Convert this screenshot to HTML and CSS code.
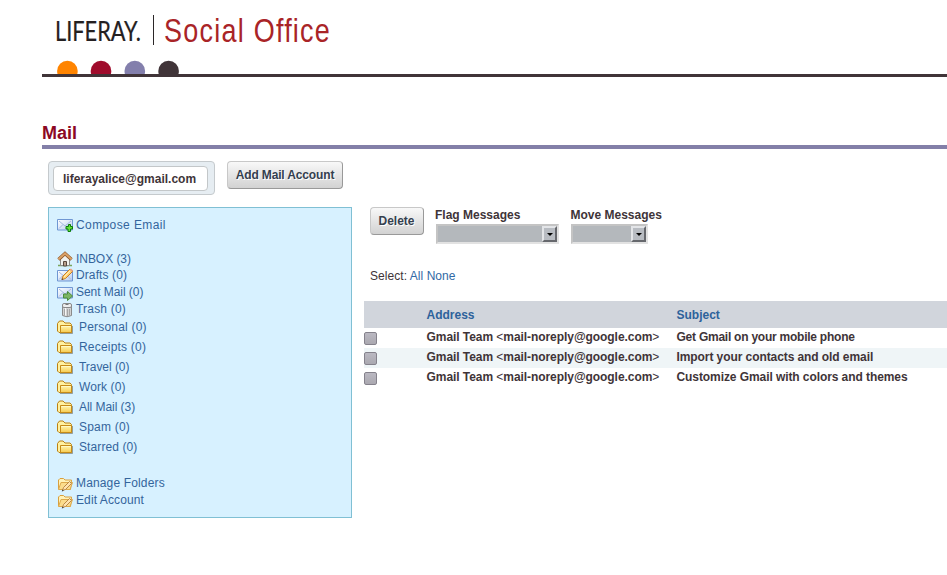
FILE: index.html
```html
<!DOCTYPE html>
<html lang="en">
<head>
<meta charset="utf-8">
<title>Mail - Liferay Social Office</title>
<link rel="stylesheet" href="styles.css">
</head>
<body>
<svg class="sprite" aria-hidden="true">
  <defs>
    <linearGradient id="gold" x2="0" y2="1"><stop stop-color="#fff9b0"/><stop offset="1" stop-color="#f6c94f"/></linearGradient>
    <linearGradient id="paper" x2="1" y2="1"><stop stop-color="#fff"/><stop offset="1" stop-color="#b8cdf0"/></linearGradient>
  </defs>
  <symbol id="envelope" viewBox="0 0 16 16">
    <path d="M.5 2.500h15v10.500h-15z" fill="url(#paper)" stroke="#6f97d3"/>
    <path d="M2 4l6 5 6-5M2 11.500l4-4M14 11.500l-4-4" fill="none" stroke="#a5b9df"/>
  </symbol>
  <symbol id="compose" viewBox="0 0 16 16">
    <use href="#envelope"/>
    <path d="M11.500 7.500h2v2h2v2.500h-2v2.500h-2.500v-2.500H9V9.500h2.500z" fill="#64df3c" stroke="#087d09"/>
  </symbol>
  <symbol id="home" viewBox="0 0 16 16">
    <path d="M1 14.500h14" stroke="#79a65b" stroke-width="1.500"/>
    <path d="M3.500 7.500L8 3.500l4.500 4V14.500h-9z" fill="#f2f2ee" stroke="#8c8c88"/>
    <path d="M6.500 15V10.500h3V15z" fill="#b8a08c" stroke="#59483e"/>
    <path d="M1.500 8.500L8 2.500l6.500 6" fill="none" stroke="#8b5527" stroke-width="3.400"/>
    <path d="M1.500 8.300L8 2.400l6.500 5.900" fill="none" stroke="#d9a066" stroke-width="2.100"/>
  </symbol>
  <symbol id="draft" viewBox="0 0 16 16">
    <use href="#envelope"/>
    <path d="M5 11.500l1-3.500 7-7 2.500 2.500-7 7z" fill="#ffd276" stroke="#c87d25"/>
    <path d="M7 9l6-6" stroke="#fff1b8"/><path d="M12.500 1.500L14 .5l2 2-1 1.500z" fill="#e8a27e"/>
    <path d="M4.500 12l.5-2 1.500 1.500z" fill="#554639"/>
  </symbol>
  <symbol id="sent" viewBox="0 0 16 16">
    <use href="#envelope"/>
    <path d="M6.500 9h4v-2.500l5 4.500-5 4.500v-2.500h-4z" fill="#7db565" stroke="#4b8c3b"/>
  </symbol>
  <symbol id="trash" viewBox="0 0 16 16">
    <path d="M3.500 4v9.500q4.500 2.500 9 0V4z" fill="#d2d2d2" stroke="#8a8a8a"/>
    <path d="M5.500 7v6.500M8.500 7v7M10.500 7v6.500" stroke="#a5a5a5"/>
    <path d="M6.500 6v7.500" stroke="#f7f7f7"/>
    <rect x="3.500" y="1.500" width="9" height="4" rx="1.500" fill="#ededed" stroke="#888"/>
    <path d="M6.500 2.500h3" stroke="#777"/>
  </symbol>
  <symbol id="folder" viewBox="0 0 16 16">
    <path d="M3 14.500h12.500V7" fill="none" stroke="#777a70" opacity=".7"/>
    <path d="M.5 12V4.500L2.500 2h3.500l2 2h5l1.500 1.500v8H2z" fill="#fff1a0" stroke="#bb8012"/>
    <path d="M3.500 6.500h11v7h-11z" fill="url(#gold)" stroke="#c58b18"/>
    <path d="M4.500 7.500h9" stroke="#fff8c4"/>
  </symbol>
  <symbol id="edit" viewBox="0 0 16 16">
    <path d="M1.500 13V4L3 2.500h3.500L8 4h6.500l-1 9.500z" fill="#fff2b8" stroke="#d9a03e"/>
    <path d="M1.500 13.500L4 6.500h11.500l-2.500 7z" fill="#fbdc8c" stroke="#dda94c"/>
    <path d="M5.500 14.500l1-3 6-6 2 2-6 6z" fill="#ffe3ae" stroke="#b98745"/>
    <path d="M4.800 15.500l.6-2 1.500 1.300z" fill="#444"/>
  </symbol>
</svg>

<header class="banner">
  <svg class="logo" width="300" height="74" viewBox="42 0 300 74" role="img" aria-label="Liferay Social Office">
    <text class="logo-brand" x="55" y="41" textLength="86" lengthAdjust="spacingAndGlyphs">LIFERAY.</text>
    <path d="M153.500 15v30" stroke="#2b2728"/>
    <text class="logo-product" transform="translate(164 42) scale(.83 1)">Social Office</text>
    <circle cx="67.400" cy="71" r="10.300" fill="#ff8400"/>
    <circle cx="101" cy="71" r="10.300" fill="#a00c2c"/>
    <circle cx="134.800" cy="71" r="10.300" fill="#837fac"/>
    <circle cx="168.600" cy="71" r="10.300" fill="#403438"/>
  </svg>
</header>

<main>
  <h1>Mail</h1>
  <div class="accounts">
    <div class="account-tab"><span>liferayalice@gmail.com</span></div>
    <button class="button add">Add Mail Account</button>
  </div>
  <div class="columns">
    <nav class="sidebar">
      <a class="loose low"><svg><use href="#compose"/></svg><span>Compose Email</span></a>
      <div class="group">
        <a class="tight low"><svg><use href="#home"/></svg><span>INBOX (3)</span></a>
        <a><svg><use href="#draft"/></svg><span>Drafts (0)</span></a>
        <a class="tight"><svg><use href="#sent"/></svg><span>Sent Mail (0)</span></a>
        <a class="trash"><svg><use href="#trash"/></svg><span>Trash (0)</span></a>
        <a class="folder wide"><svg><use href="#folder"/></svg><span>Personal (0)</span></a>
        <a class="folder wide"><svg><use href="#folder"/></svg><span>Receipts (0)</span></a>
        <a class="folder tight"><svg><use href="#folder"/></svg><span>Travel (0)</span></a>
        <a class="folder"><svg><use href="#folder"/></svg><span>Work (0)</span></a>
        <a class="folder tight"><svg><use href="#folder"/></svg><span>All Mail (3)</span></a>
        <a class="folder wide"><svg><use href="#folder"/></svg><span>Spam (0)</span></a>
        <a class="folder"><svg><use href="#folder"/></svg><span>Starred (0)</span></a>
      </div>
      <div class="group">
        <a class="manage"><svg><use href="#edit"/></svg><span>Manage Folders</span></a>
        <a><svg><use href="#edit"/></svg><span>Edit Account</span></a>
      </div>
    </nav>
    <section class="messages">
      <div class="toolbar">
        <button class="button delete">Delete</button>
        <div class="field flag"><span>Flag Messages</span><div class="select"><i></i></div></div>
        <div class="field move"><span>Move Messages</span><div class="select"><i></i></div></div>
      </div>
      <p class="pick">Select: <a>All</a> <a>None</a></p>
      <div class="table">
        <div class="row head"><span></span><span>Address</span><span>Subject</span></div>
        <div class="row"><b class="check"></b><span class="from">Gmail Team <i>&lt;</i>mail-noreply@google.com<i>&gt;</i></span><span class="narrow">Get Gmail on your mobile phone</span></div>
        <div class="row alt"><b class="check"></b><span class="from">Gmail Team <i>&lt;</i>mail-noreply@google.com<i>&gt;</i></span><span class="subject">Import your contacts and old email</span></div>
        <div class="row"><b class="check"></b><span class="from">Gmail Team <i>&lt;</i>mail-noreply@google.com<i>&gt;</i></span><span class="subject">Customize Gmail with colors and themes</span></div>
      </div>
    </section>
  </div>
</main>
</body>
</html>
```
FILE: styles.css
```css
* { box-sizing: border-box; }
body {
  margin: 0;
  height: 575px;
  overflow: hidden;
  background: #fff;
  color: #403438;
  font: 12px/17px "Liberation Sans", Arial, sans-serif;
}
.sprite { position: absolute; width: 0; height: 0; }
.banner { margin-left: 42px; height: 77px; border-bottom: 3px solid #403438; }
.logo { display: block; }
.logo-brand { font: 27px Lato, sans-serif; fill: #242021; stroke: #242021; stroke-width: .2px; }
.logo-product { font: 32.5px "Liberation Sans", sans-serif; letter-spacing: 1.5px; fill: #a92427; }
main { margin-left: 42px; }
h1 {
  margin: 0;
  padding-top: 46px;
  height: 72px;
  border-bottom: 4px solid #837fa8;
  color: #8c0824;
  font-size: 18px;
  line-height: 20px;
}
.accounts { display: flex; align-items: flex-start; gap: 12px; margin: 12px 0 12px 6px; }
.account-tab {
  width: 167px;
  height: 34px;
  padding: 4px;
  background: #e6edf2;
  border: 1px solid #c5cacd;
  border-radius: 4px;
}
.account-tab span {
  display: block;
  width: 155px;
  height: 25px;
  padding-left: 9px;
  background: #fff;
  border: 1px solid #c3c7c9;
  border-radius: 4px;
  font-weight: bold;
  line-height: 24px;
}
.button {
  height: 28px;
  padding: 0 0 1px;
  background: linear-gradient(#f8f8f8, #d2d2d2);
  border: 1px solid;
  border-color: #c8c8c8 #999 #999 #c8c8c8;
  border-radius: 4px;
  color: #34404f;
  font: bold 12px "Liberation Sans", Arial, sans-serif;
  text-shadow: 1px 1px #fff;
  white-space: nowrap;
}
.add { width: 116px; letter-spacing: -.15px; }
.delete { width: 54px; padding-right: 1px; }
.columns { display: flex; gap: 12px; margin-left: 6px; }
.sidebar {
  flex: none;
  width: 304px;
  height: 311px;
  padding: 8px;
  background: #d7f1ff;
  border: 1px solid #80c0d4;
  color: #34659c;
  letter-spacing: .1px;
}
.sidebar a { display: flex; align-items: center; gap: 3px; height: 17px; }
.sidebar svg { width: 16px; height: 16px; flex: none; }
.sidebar .low span { padding-top: 2px; }
.sidebar .loose { letter-spacing: .4px; }
.sidebar .wide { letter-spacing: .2px; }
.sidebar .manage { letter-spacing: .15px; }
.sidebar .tight { letter-spacing: -.05px; }
.sidebar .trash { letter-spacing: .2px; }
.sidebar .trash svg { margin: 0 -2px 0 2px; }
.sidebar .folder { height: 20px; gap: 6px; padding-bottom: 2px; }
.group { margin-top: 17px; }
.messages { flex: 1; min-width: 0; }
.toolbar { display: flex; align-items: flex-start; height: 37px; padding-left: 6px; }
.field { display: grid; font-weight: bold; line-height: 16px; white-space: nowrap; }
.flag { width: 124px; margin-left: 11px; }
.move { width: 92px; margin-left: 11px; }
.move > span { padding-left: .5px; }
.select {
  display: flex;
  justify-content: flex-end;
  height: 20px;
  margin: 1px 0 0 1px;
  background: #b4b8bc;
  border: 2px solid;
  border-color: #c4c4c4 #e2e2e2 #e2e2e2 #c4c4c4;
}
.move .select { width: 77px; }
.select i {
  display: grid;
  place-items: center;
  width: 15px;
  height: 16px;
  background: #b8bcc2;
  border: 2px solid;
  border-color: #e3e5e8 #66686d #66686d #e3e5e8;
}
.select i::after { content: ""; border: 3px solid transparent; border-top-color: #000; border-bottom: 0; }
.pick { margin: 24px 0 16px 6px; letter-spacing: .05px; }
.pick a { color: #3169a5; }
.row {
  display: grid;
  grid-template-columns: 62px 250px 1fr;
  height: 20px;
  font-weight: bold;
  line-height: 19px;
  white-space: nowrap;
}
.row span { padding-left: .5px; }
.row .from { letter-spacing: -.06px; }
.row .from i { font-style: normal; font-weight: normal; }
.row .narrow { letter-spacing: -.24px; }
.row .subject { letter-spacing: -.08px; }
.row.head { height: 27px; background: #d1d5dc; color: #2d629b; line-height: 28px; }
.row.alt { background: #eff5f7; }
.check {
  width: 13px;
  height: 13px;
  margin-top: 4px;
  background: linear-gradient(#bbb9c2, #aaa8b0);
  border: 1px solid #85828c;
  border-radius: 2px;
}
```
